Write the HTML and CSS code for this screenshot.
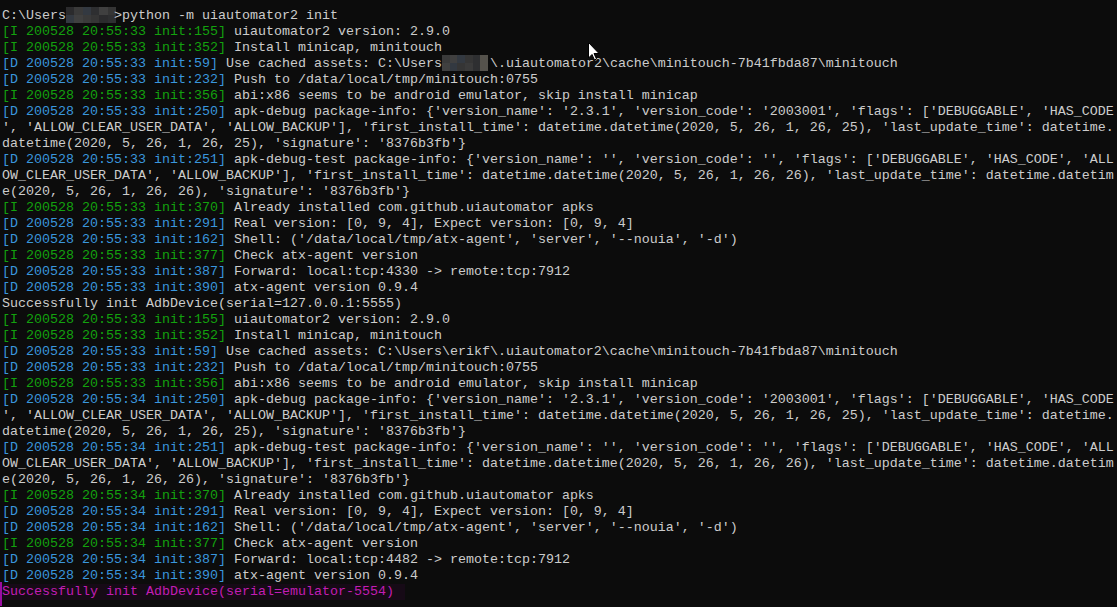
FILE: index.html
```html
<!DOCTYPE html>
<html>
<head>
<meta charset="utf-8">
<link rel="stylesheet" href="styles.css">
</head>
<body>
<div class="term">
<div class="ln">C:\Users<span class="blur b1"><i class="c1"></i><i class="c2"></i><i class="c3"></i><i class="c4"></i><i class="c5"></i><i class="c6"></i><i class="c3"></i><i class="c5"></i><i class="c2"></i><i class="c6"></i><i class="c1"></i><i class="c4"></i></span>&gt;python -m uiautomator2 init</div>
<div class="ln"><span class="g">[I 200528 20:55:33 init:155]</span> uiautomator2 version: 2.9.0</div>
<div class="ln"><span class="g">[I 200528 20:55:33 init:352]</span> Install minicap, minitouch</div>
<div class="ln"><span class="b">[D 200528 20:55:33 init:59]</span> Use cached assets: C:\Users<span class="blur b2"><i class="c2"></i><i class="c5"></i><i class="c3"></i><i class="c6"></i><i class="c4"></i><i class="c7"></i><i class="c5"></i><i class="c3"></i><i class="c6"></i><i class="c2"></i><i class="c4"></i><i class="c7"></i></span>\.uiautomator2\cache\minitouch-7b41fbda87\minitouch</div>
<div class="ln"><span class="b">[D 200528 20:55:33 init:232]</span> Push to /data/local/tmp/minitouch:0755</div>
<div class="ln"><span class="g">[I 200528 20:55:33 init:356]</span> abi:x86 seems to be android emulator, skip install minicap</div>
<div class="ln"><span class="b">[D 200528 20:55:33 init:250]</span> apk-debug package-info: {'version_name': '2.3.1', 'version_code': '2003001', 'flags': ['DEBUGGABLE', 'HAS_CODE</div>
<div class="ln">', 'ALLOW_CLEAR_USER_DATA', 'ALLOW_BACKUP'], 'first_install_time': datetime.datetime(2020, 5, 26, 1, 26, 25), 'last_update_time': datetime.</div>
<div class="ln">datetime(2020, 5, 26, 1, 26, 25), 'signature': '8376b3fb'}</div>
<div class="ln"><span class="b">[D 200528 20:55:33 init:251]</span> apk-debug-test package-info: {'version_name': '', 'version_code': '', 'flags': ['DEBUGGABLE', 'HAS_CODE', 'ALL</div>
<div class="ln">OW_CLEAR_USER_DATA', 'ALLOW_BACKUP'], 'first_install_time': datetime.datetime(2020, 5, 26, 1, 26, 26), 'last_update_time': datetime.datetim</div>
<div class="ln">e(2020, 5, 26, 1, 26, 26), 'signature': '8376b3fb'}</div>
<div class="ln"><span class="g">[I 200528 20:55:33 init:370]</span> Already installed com.github.uiautomator apks</div>
<div class="ln"><span class="b">[D 200528 20:55:33 init:291]</span> Real version: [0, 9, 4], Expect version: [0, 9, 4]</div>
<div class="ln"><span class="b">[D 200528 20:55:33 init:162]</span> Shell: ('/data/local/tmp/atx-agent', 'server', '--nouia', '-d')</div>
<div class="ln"><span class="g">[I 200528 20:55:33 init:377]</span> Check atx-agent version</div>
<div class="ln"><span class="b">[D 200528 20:55:33 init:387]</span> Forward: local:tcp:4330 -&gt; remote:tcp:7912</div>
<div class="ln"><span class="b">[D 200528 20:55:33 init:390]</span> atx-agent version 0.9.4</div>
<div class="ln">Successfully init AdbDevice(serial=127.0.0.1:5555)</div>
<div class="ln"><span class="g">[I 200528 20:55:33 init:155]</span> uiautomator2 version: 2.9.0</div>
<div class="ln"><span class="g">[I 200528 20:55:33 init:352]</span> Install minicap, minitouch</div>
<div class="ln"><span class="b">[D 200528 20:55:33 init:59]</span> Use cached assets: C:\Users\erikf\.uiautomator2\cache\minitouch-7b41fbda87\minitouch</div>
<div class="ln"><span class="b">[D 200528 20:55:33 init:232]</span> Push to /data/local/tmp/minitouch:0755</div>
<div class="ln"><span class="g">[I 200528 20:55:33 init:356]</span> abi:x86 seems to be android emulator, skip install minicap</div>
<div class="ln"><span class="b">[D 200528 20:55:34 init:250]</span> apk-debug package-info: {'version_name': '2.3.1', 'version_code': '2003001', 'flags': ['DEBUGGABLE', 'HAS_CODE</div>
<div class="ln">', 'ALLOW_CLEAR_USER_DATA', 'ALLOW_BACKUP'], 'first_install_time': datetime.datetime(2020, 5, 26, 1, 26, 25), 'last_update_time': datetime.</div>
<div class="ln">datetime(2020, 5, 26, 1, 26, 25), 'signature': '8376b3fb'}</div>
<div class="ln"><span class="b">[D 200528 20:55:34 init:251]</span> apk-debug-test package-info: {'version_name': '', 'version_code': '', 'flags': ['DEBUGGABLE', 'HAS_CODE', 'ALL</div>
<div class="ln">OW_CLEAR_USER_DATA', 'ALLOW_BACKUP'], 'first_install_time': datetime.datetime(2020, 5, 26, 1, 26, 26), 'last_update_time': datetime.datetim</div>
<div class="ln">e(2020, 5, 26, 1, 26, 26), 'signature': '8376b3fb'}</div>
<div class="ln"><span class="g">[I 200528 20:55:34 init:370]</span> Already installed com.github.uiautomator apks</div>
<div class="ln"><span class="b">[D 200528 20:55:34 init:291]</span> Real version: [0, 9, 4], Expect version: [0, 9, 4]</div>
<div class="ln"><span class="b">[D 200528 20:55:34 init:162]</span> Shell: ('/data/local/tmp/atx-agent', 'server', '--nouia', '-d')</div>
<div class="ln"><span class="g">[I 200528 20:55:34 init:377]</span> Check atx-agent version</div>
<div class="ln"><span class="b">[D 200528 20:55:34 init:387]</span> Forward: local:tcp:4482 -&gt; remote:tcp:7912</div>
<div class="ln"><span class="b">[D 200528 20:55:34 init:390]</span> atx-agent version 0.9.4</div>
<div class="ln last"><span class="sel">Successfully init AdbDevice(serial=emulator-5554)</span></div>
</div>
<svg class="cursor" width="12" height="19" viewBox="0 0 12 19"><path d="M0.5 0.5 L0.5 16 L4 12.5 L6.5 18 L8.5 17 L6 11.5 L11 11.5 Z" fill="#fff" stroke="#000" stroke-width="1"/></svg>
</body>
</html>
```
FILE: styles.css
```css
html, body {
  margin: 0;
  padding: 0;
  background: #0c0c0c;
  width: 1117px;
  height: 607px;
  overflow: hidden;
}
.term {
  padding: 8px 0 0 2px;
  font-family: "Liberation Mono", "DejaVu Sans Mono", monospace;
  font-size: 13.333px;
  color: #cccccc;
}
.ln {
  height: 16px;
  line-height: 16px;
  white-space: pre;
}
.g { color: #13a10e; }
.b { color: #3a96dd; }
.blur {
  display: inline-grid;
  grid-template-columns: repeat(6, 1fr);
  grid-template-rows: 8px 8px;
  vertical-align: top;
  height: 16px;
  margin-top: -1px;
}
.b1 { width: 50px; margin-right: -2px; }
.b2 { width: 46px; margin-right: 2px; }
.blur i { display: block; }
.c1 { background: #2b2b2d; }
.c2 { background: #3a3a3a; }
.c3 { background: #333941; }
.c4 { background: #2e2f31; }
.c5 { background: #404040; }
.c6 { background: #353535; }
.c7 { background: #55524c; }
.last {
  position: relative;
}
.last::before {
  content: "";
  position: absolute;
  left: -2px;
  top: -2px;
  width: 2px;
  height: 24px;
  background: #9a0ea0;
}
.sel {
  display: inline-block;
  background: #160a16;
  color: #c21db4;
  padding-right: 11px;
}
.cursor {
  position: absolute;
  left: 588px;
  top: 42px;
}
```
